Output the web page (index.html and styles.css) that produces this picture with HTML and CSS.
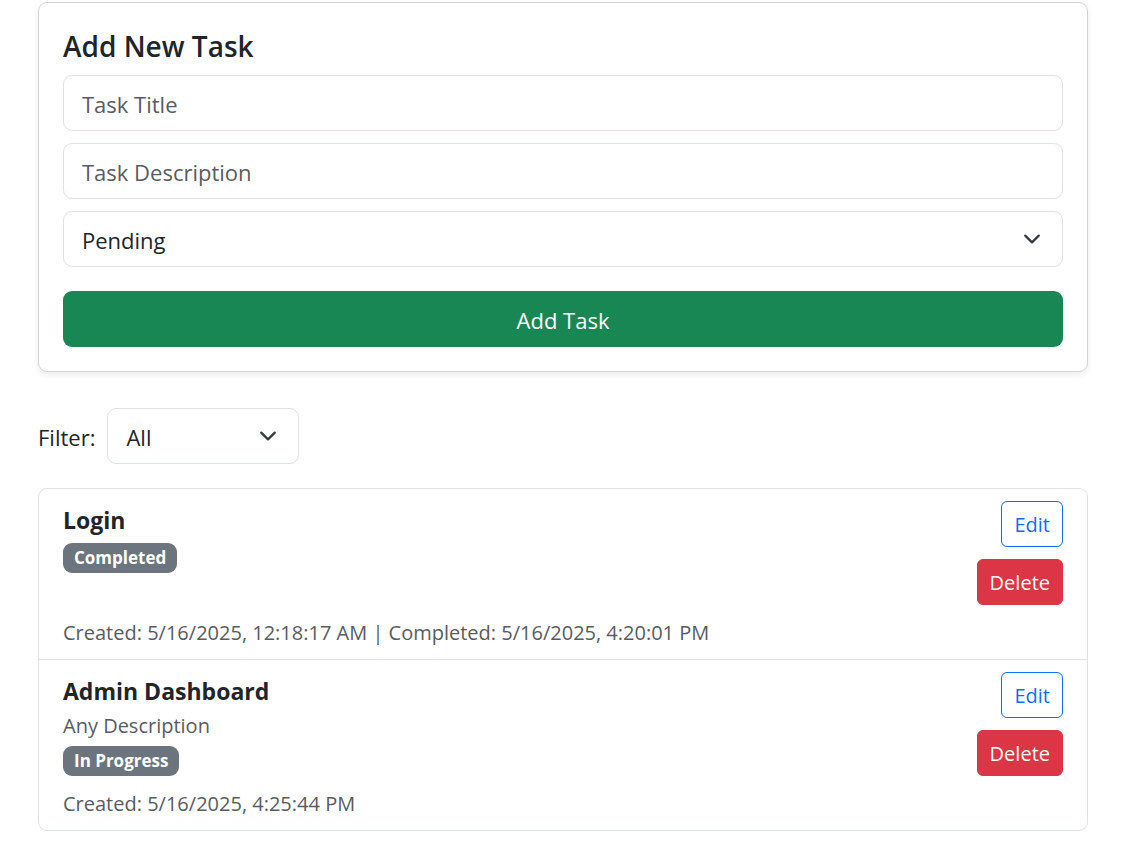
FILE: index.html
```html
<!DOCTYPE html>
<html lang="en">
<head>
<meta charset="utf-8">
<meta name="viewport" content="width=device-width, initial-scale=1">
<title>Task Manager</title>
<link rel="stylesheet" href="styles.css">
</head>
<body>
<main class="page">
  <form class="card">
    <h1 class="card-title">Add New Task</h1>
    <input class="control" type="text" placeholder="Task Title" aria-label="Task Title">
    <input class="control" type="text" placeholder="Task Description" aria-label="Task Description">
    <div class="select-wrap">
      <select class="control select" aria-label="Status">
        <option>Pending</option>
        <option>In Progress</option>
        <option>Completed</option>
      </select>
      <svg class="chevron" viewBox="0 0 16 16" aria-hidden="true"><path d="m2 5 6 6 6-6"/></svg>
    </div>
    <button class="submit" type="button">Add Task</button>
  </form>

  <div class="filter">
    <label class="filter-label" for="filter">Filter:</label>
    <div class="select-wrap filter-select">
      <select class="control select" id="filter">
        <option>All</option>
        <option>Pending</option>
        <option>In Progress</option>
        <option>Completed</option>
      </select>
      <svg class="chevron" viewBox="0 0 16 16" aria-hidden="true"><path d="m2 5 6 6 6-6"/></svg>
    </div>
  </div>

  <ul class="tasks">
    <li class="task">
      <div class="task-main">
        <h2 class="task-title">Login</h2>
        <span class="badge">Completed</span>
      </div>
      <div class="actions">
        <button class="btn edit" type="button">Edit</button>
        <button class="btn delete" type="button">Delete</button>
      </div>
      <p class="dates">Created: 5/16/2025, 12:18:17 AM | Completed: 5/16/2025, 4:20:01 PM</p>
    </li>
    <li class="task">
      <div class="task-main">
        <h2 class="task-title">Admin Dashboard</h2>
        <p class="description">Any Description</p>
        <span class="badge">In Progress</span>
      </div>
      <div class="actions">
        <button class="btn edit" type="button">Edit</button>
        <button class="btn delete" type="button">Delete</button>
      </div>
      <p class="dates">Created: 5/16/2025, 4:25:44 PM</p>
    </li>
  </ul>
</main>
</body>
</html>
```
FILE: styles.css
```css
* {
  box-sizing: border-box;
}

body {
  margin: 0;
  background: #fff;
  color: #212529;
  font: 22px/36px "Segoe UI", "Open Sans", "Noto Sans", sans-serif;
}

h1, h2, p, ul {
  margin: 0;
  padding: 0;
}

button, input, select {
  font: inherit;
}

.page {
  padding: 2px 50px 0 38px;
}

.card {
  display: flex;
  flex-direction: column;
  gap: 12px;
  padding: 24px;
  border: 1px solid #d3d4d5;
  border-radius: 9px;
  box-shadow: 0 3px 6px rgba(0, 0, 0, 0.08);
}

.card-title {
  padding-top: 2px;
  font-size: 28px;
  font-weight: 600;
  line-height: 34px;
}

.control {
  width: 100%;
  height: 56px;
  padding: 2px 18px 0;
  border: 1px solid #dee2e6;
  border-radius: 9px;
  background: #fff;
  color: #212529;
}

.control::placeholder {
  color: #595c5f;
  opacity: 1;
}

.select-wrap {
  display: grid;
  align-items: center;
}

.select {
  grid-area: 1 / 1;
  appearance: none;
}

.chevron {
  grid-area: 1 / 1;
  justify-self: end;
  width: 18px;
  height: 18px;
  margin-right: 22px;
  pointer-events: none;
  fill: none;
  stroke: #343a40;
  stroke-width: 2;
  stroke-linecap: round;
  stroke-linejoin: round;
}

.submit {
  height: 56px;
  margin-top: 12px;
  padding: 2px 18px 0;
  border: 0;
  border-radius: 9px;
  background: #198754;
  color: #fff;
}

.filter {
  display: flex;
  align-items: center;
  gap: 12px;
  margin: 36px 0 24px;
}

.filter-label {
  padding-top: 2px;
}

.filter-select {
  width: 192px;
}

.tasks {
  list-style: none;
  border: 1px solid #dee2e6;
  border-radius: 9px;
}

.task {
  display: grid;
  grid-template-columns: 1fr auto;
  row-gap: 12px;
  padding: 12px 24px 10px;
}

.task + .task {
  border-top: 1px solid #dee2e6;
}

.task-title {
  font-size: 23px;
  font-weight: 700;
  line-height: 38px;
}

.description, .dates {
  color: #595c5f;
  font-size: 20px;
  line-height: 32px;
}

.badge {
  display: block;
  width: fit-content;
  margin-top: 4px;
  padding: 0 11px;
  border-radius: 9px;
  background: #6c757d;
  color: #fff;
  font-size: 17px;
  font-weight: 700;
  line-height: 30px;
}

.actions {
  display: flex;
  flex-direction: column;
  align-items: flex-end;
  gap: 12px;
}

.btn {
  height: 46px;
  padding: 1px 12px 0;
  border: 1px solid;
  border-radius: 6px;
  font-size: 20px;
  line-height: 32px;
}

.edit {
  border-color: #0d6efd;
  background: #fff;
  color: #0d6efd;
}

.delete {
  border-color: #dc3545;
  background: #dc3545;
  color: #fff;
}

.dates {
  grid-column: 1 / -1;
}
```
